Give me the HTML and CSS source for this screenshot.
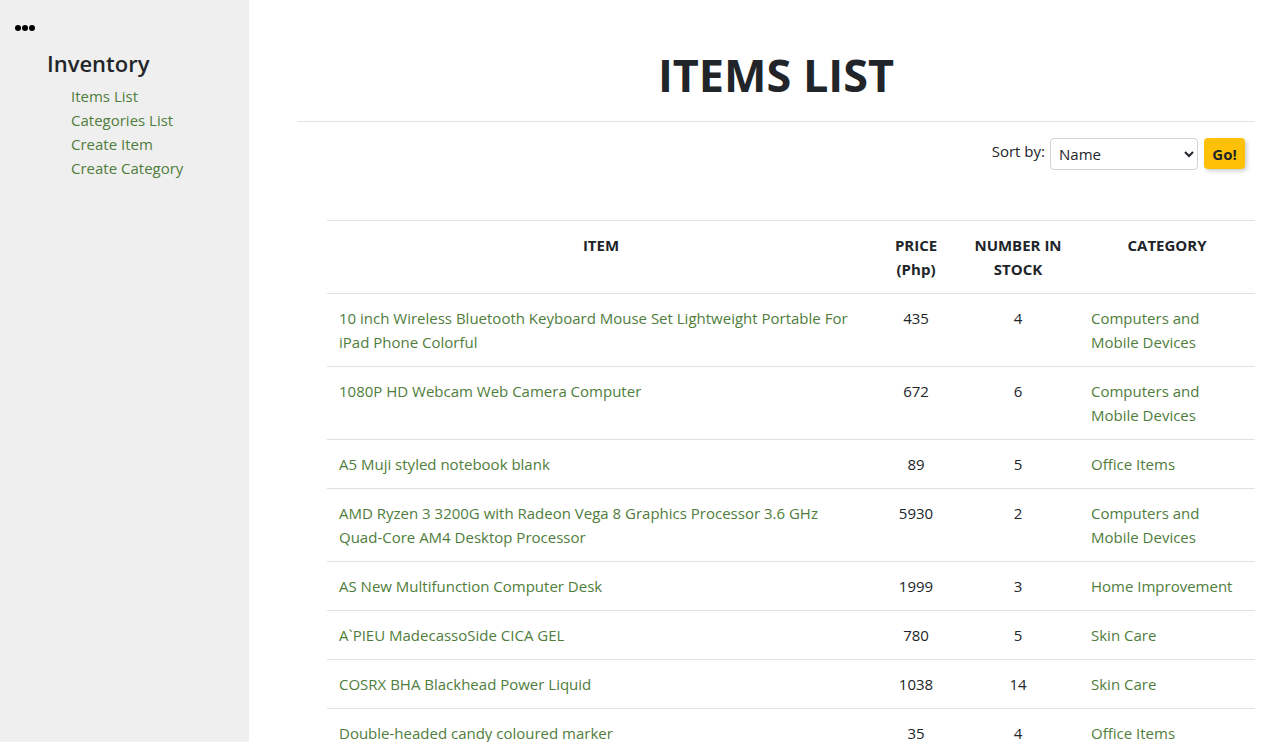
FILE: index.html
```html
<!DOCTYPE html>
<html lang="en">
<head>
<meta charset="utf-8">
<title>Items List</title>
<link rel="stylesheet" href="styles.css">
</head>
<body>
<div class="page">
  <aside class="sidebar">
    <div class="dots" aria-label="menu">
      <svg width="22" height="8" viewBox="0 0 22 8"><circle cx="4" cy="4" r="3"/><circle cx="11" cy="4" r="3"/><circle cx="18" cy="4" r="3"/></svg>
    </div>
    <h2 class="side-title">Inventory</h2>
    <ul class="side-links">
      <li><a href="#">Items List</a></li>
      <li><a href="#">Categories List</a></li>
      <li><a href="#">Create Item</a></li>
      <li><a href="#">Create Category</a></li>
    </ul>
  </aside>
  <main class="main">
    <h1 class="title">ITEMS LIST</h1>
    <hr class="rule">
    <form class="sort-form">
      <label class="sort-label" for="sort">Sort by:</label>
      <select id="sort" class="sort-select">
        <option>Name</option>
        <option>Price</option>
        <option>Stock</option>
      </select>
      <button type="button" class="go-btn">Go!</button>
    </form>
    <table class="items">
      <colgroup>
        <col class="c-item"><col class="c-price"><col class="c-stock"><col class="c-cat">
      </colgroup>
      <thead>
        <tr><th>ITEM</th><th>PRICE (Php)</th><th>NUMBER IN STOCK</th><th>CATEGORY</th></tr>
      </thead>
      <tbody>
        <tr><td><a href="#">10 inch Wireless Bluetooth Keyboard Mouse Set Lightweight Portable For iPad Phone Colorful</a></td><td class="num">435</td><td class="num">4</td><td><a href="#">Computers and Mobile Devices</a></td></tr>
        <tr><td><a href="#">1080P HD Webcam Web Camera Computer</a></td><td class="num">672</td><td class="num">6</td><td><a href="#">Computers and Mobile Devices</a></td></tr>
        <tr><td><a href="#">A5 Muji styled notebook blank</a></td><td class="num">89</td><td class="num">5</td><td><a href="#">Office Items</a></td></tr>
        <tr><td><a href="#">AMD Ryzen 3 3200G with Radeon Vega 8 Graphics Processor 3.6 GHz Quad-Core AM4 Desktop Processor</a></td><td class="num">5930</td><td class="num">2</td><td><a href="#">Computers and Mobile Devices</a></td></tr>
        <tr><td><a href="#">AS New Multifunction Computer Desk</a></td><td class="num">1999</td><td class="num">3</td><td><a href="#">Home Improvement</a></td></tr>
        <tr><td><a href="#">A`PIEU MadecassoSide CICA GEL</a></td><td class="num">780</td><td class="num">5</td><td><a href="#">Skin Care</a></td></tr>
        <tr><td><a href="#">COSRX BHA Blackhead Power Liquid</a></td><td class="num">1038</td><td class="num">14</td><td><a href="#">Skin Care</a></td></tr>
        <tr><td><a href="#">Double-headed candy coloured marker</a></td><td class="num">35</td><td class="num">4</td><td><a href="#">Office Items</a></td></tr>
      </tbody>
    </table>
  </main>
</div>
</body>
</html>
```
FILE: styles.css
```css
* { box-sizing: border-box; }
html, body { margin: 0; padding: 0; }
body {
  font-family: "Open Sans", "Noto Sans", "Liberation Sans", sans-serif;
  font-size: 15px;
  line-height: 24px;
  color: #212529;
  background: #fff;
}
a { color: #4f7d3c; text-decoration: none; }

.page { display: flex; min-height: 100vh; }

.sidebar {
  width: 249px;
  flex: 0 0 249px;
  background: #efefef;
  padding: 24px 0 0 0;
}
.dots { padding-left: 14px; height: 8px; line-height: 0; }
.dots svg { fill: #000; display: block; }
.side-title {
  margin: 17px 0 0 47px;
  font-size: 22px;
  line-height: 29px;
  font-weight: 600;
}
.side-links {
  list-style: none;
  margin: 6px 0 0 71px;
  padding: 0;
}
.side-links li { line-height: 24px; }

.main { flex: 1; padding: 0 31px 0 48px; }
.title {
  margin: 46px 0 0;
  text-align: center;
  font-size: 45px;
  line-height: 58px;
  font-weight: 700;
}
.rule {
  margin: 17px 0 0;
  border: 0;
  border-top: 1px solid #e3e3e3;
  height: 0;
}
.sort-form {
  display: flex;
  justify-content: flex-end;
  align-items: flex-start;
  gap: 6px;
  margin-top: 16px;
  padding-right: 10px;
}
.sort-label { line-height: 24px; padding-top: 1px; margin-right: -1px; }
.sort-select {
  width: 148px;
  height: 32px;
  border: 1px solid #ced4da;
  border-radius: 4px;
  background: #fff;
  font-family: inherit;
  font-size: 15px;
  color: #212529;
  padding: 0 4px;
}
.go-btn {
  height: 31px;
  width: 41px;
  padding: 0;
  border: 0;
  border-radius: 4px;
  background: #ffc107;
  font-family: inherit;
  font-size: 15px;
  font-weight: 700;
  color: #212529;
  box-shadow: 2px 2px 4px rgba(0,0,0,.2);
}

.items {
  margin: 50px 0 0 30px;
  width: 928px;
  border-collapse: collapse;
  table-layout: fixed;
}
.c-item { width: 548px; }
.c-price { width: 82px; }
.c-stock { width: 122px; }
.c-cat { width: 176px; }
.items th, .items td {
  padding: 12px;
  border-top: 1px solid #dee2e6;
  vertical-align: top;
}
.items tr:last-child td { border-bottom: 1px solid #dee2e6; }
.items th { text-align: center; font-weight: 700; }
.items td { text-align: left; }
.items td.num { text-align: center; }
```
